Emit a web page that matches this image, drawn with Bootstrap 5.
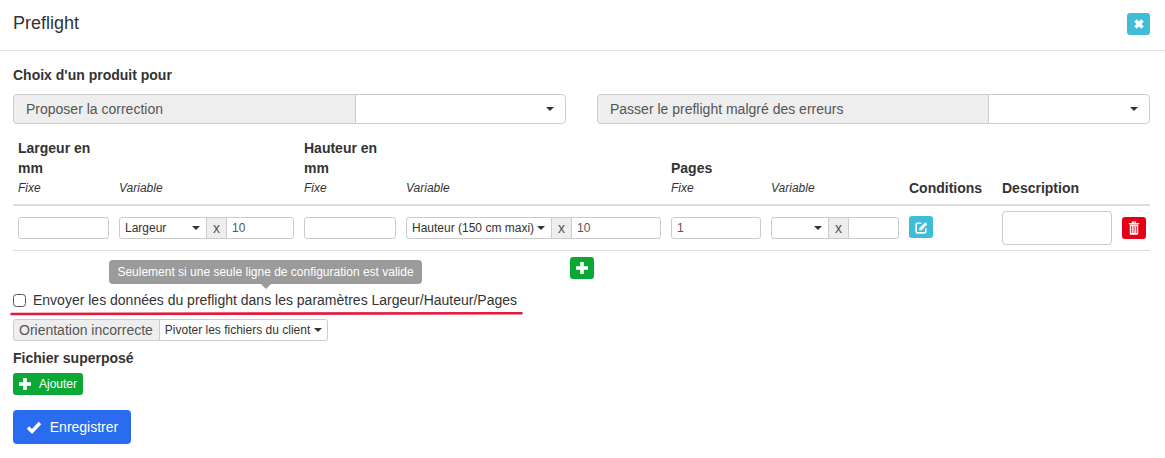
<!DOCTYPE html>
<html lang="fr"><head><meta charset="utf-8"><title>Preflight</title>
<link href="https://cdn.jsdelivr.net/npm/bootstrap@5.3.0/dist/css/bootstrap.min.css" rel="stylesheet">
<style>
body{font-family:"Liberation Sans",Arial,sans-serif;font-size:14px;line-height:20px;color:#333;background:#fff}
.pf-head{height:51px;padding:13px 15px 0 13px;border-bottom:1px solid #e5e5e5}
.pf-title{font-size:18px;line-height:20px;margin:0;font-weight:400}
.pf-body{padding:14px 15px 0 13px;position:relative}
.pf-strong{font-weight:700;font-size:14px;margin:0}
.pf-icobtn{width:24px;height:22px;padding:0;border:0;border-radius:3px;color:#fff;display:inline-flex;align-items:center;justify-content:center}
.pf-close{width:23px}
.pf-info{background:#3fbcd8}.pf-green{background:#0ba838}.pf-red{background:#e60017}
.pf-top{margin-top:9px;gap:31px}
.pf-top .input-group{width:553px;height:30px;flex-wrap:nowrap}
.pf-top .input-group-text{font-size:14px;padding:0 12px;background:#eee;color:#555;border-color:#ccc;border-radius:4px 0 0 4px}
.pf-sel{background:#fff;border:1px solid #ccc;border-radius:0 4px 4px 0;padding:0 11px 0 5px;display:flex;align-items:center;justify-content:space-between;font-size:12px;color:#333;white-space:nowrap;text-align:left}
.pf-sel::after,.pf-sel:empty::after{margin:0 0 0 auto;border-top-color:#333;border-width:4px 4px 0;flex:none}
.pf-sel:hover,.pf-sel:active{background:#fff!important;color:#333!important;border-color:#ccc!important}
.pf-top .pf-a{width:343px;flex:none}.pf-top .pf-a2{width:392px;flex:none}
.pf-top .pf-sel{flex:1}
.pf-table{table-layout:fixed;width:1137px;margin:9px 0 0;color:#333;border-collapse:collapse}
.pf-table>:not(caption)>*>*{padding:0 5px;border:0;background:transparent;box-shadow:none;color:#333}
.pf-table thead tr:first-child th{padding-top:5px;vertical-align:bottom;line-height:20px}
.pf-table thead tr:last-child>*{padding-bottom:6px;border-bottom:2px solid #ddd;vertical-align:bottom}
.pf-table thead em{font-size:12px;font-weight:400;line-height:21px;display:block;height:20px}
.pf-table tbody td{padding:5px;border-bottom:1px solid #ddd;vertical-align:middle;height:45px}
.pf-c1{width:101px}.pf-c2{width:185px}.pf-c3{width:102px}.pf-c4{width:265px}.pf-c5{width:100px}.pf-c6{width:138px}.pf-c7{width:93px}.pf-c8{width:120px}.pf-c9{width:33px}
.pf-in{height:22px;font-size:12px;line-height:20px;padding:0 5px;border:1px solid #ccc;border-radius:3px;color:#555;width:100%;min-height:0}
.pf-g{height:22px;flex-wrap:nowrap;width:100%}
.pf-g .input-group-text{height:22px;font-size:14px;padding:0 6px;background:#eee;color:#555;border-color:#ccc;border-radius:0;flex:none}
.pf-g .pf-sel{height:22px;border:1px solid #ccc;border-radius:3px 0 0 3px;flex:none;padding:0 6px 0 5px}
.pf-g .pf-in{flex:1;border-radius:0 3px 3px 0;width:1%}
.pf-w1{width:88px}.pf-w2{width:146px}.pf-w3{width:58px}
textarea.pf-desc{height:34px;width:110px;border:1px solid #ccc;border-radius:4px;padding:0 5px;display:block;resize:none;min-height:0}
.pf-addrow{margin-top:6px;padding-left:557px;height:22px}
.pf-check{margin-top:11px;display:flex;align-items:center;gap:7px;height:20px}
.pf-check input{width:13px;height:13px;margin:0;border:1px solid #555;border-radius:2.5px;flex:none}
.pf-tip{position:absolute;left:109px;top:209px;background:#9b9b9b;color:#fff;font-size:12px;line-height:16px;padding:4px 8px;border-radius:4px;white-space:nowrap;width:313px;text-align:center}
.pf-tip::after{content:"";position:absolute;left:50%;bottom:-5px;margin-left:-5px;border-style:solid;border-width:5px 5px 0;border-color:#9b9b9b transparent transparent}
.pf-line{position:absolute;left:10px;top:259px;width:513px;height:6px;display:block}
.pf-orient{margin-top:9px;height:22px;width:315px;flex-wrap:nowrap}
.pf-orient .input-group-text{height:22px;padding:0 6px 0 5px;font-size:14px;background:#eee;color:#555;border-color:#ccc;border-radius:3px 0 0 3px}
.pf-orient .pf-sel{flex:1;height:22px;border-radius:0 3px 3px 0;padding:0 5px}
.pf-ov{margin-top:7px}
.pf-add{margin-top:5px;height:22px;width:70px;background:#0ba838;color:#fff;border:0;border-radius:3px;font-size:12px;padding:0 0 0 6px;display:flex;align-items:center;gap:8px}
.pf-save{margin-top:15px;width:118px;height:34px;background:#2a6cf0;color:#fff;border:0;border-radius:4px;font-size:14px;padding:0;display:flex;align-items:center;justify-content:center;gap:8px}
</style></head>
<body>
<div class="pf-head d-flex justify-content-between align-items-start">
  <h4 class="pf-title">Preflight</h4>
  <button class="pf-icobtn pf-close pf-info" type="button" aria-label="Fermer"><svg width="12" height="12" viewBox="0 0 12 12"><path d="M2.500 2.500l7 7M9.500 2.500l-7 7" stroke="#fff" stroke-width="3.400" fill="none"/></svg></button>
</div>
<div class="pf-body">
  <p class="pf-strong">Choix d'un produit pour</p>
  <div class="d-flex pf-top">
    <div class="input-group"><span class="input-group-text pf-a">Proposer la correction</span><button type="button" class="btn dropdown-toggle pf-sel"></button></div>
    <div class="input-group"><span class="input-group-text pf-a2">Passer le preflight malgré des erreurs</span><button type="button" class="btn dropdown-toggle pf-sel"></button></div>
  </div>
  <table class="table pf-table">
    <colgroup><col class="pf-c1"><col class="pf-c2"><col class="pf-c3"><col class="pf-c4"><col class="pf-c5"><col class="pf-c6"><col class="pf-c7"><col class="pf-c8"><col class="pf-c9"></colgroup>
    <thead>
      <tr><th>Largeur en mm</th><th></th><th>Hauteur en mm</th><th></th><th>Pages</th><th></th><th></th><th></th><th></th></tr>
      <tr><th><em>Fixe</em></th><th><em>Variable</em></th><th><em>Fixe</em></th><th><em>Variable</em></th><th><em>Fixe</em></th><th><em>Variable</em></th><th>Conditions</th><th>Description</th><th></th></tr>
    </thead>
    <tbody><tr>
      <td><input class="form-control pf-in" type="text"></td>
      <td><div class="input-group pf-g"><button type="button" class="btn dropdown-toggle pf-sel pf-w1">Largeur</button><span class="input-group-text">x</span><input class="form-control pf-in" type="text" value="10"></div></td>
      <td><input class="form-control pf-in" type="text"></td>
      <td><div class="input-group pf-g"><button type="button" class="btn dropdown-toggle pf-sel pf-w2">Hauteur (150 cm maxi)</button><span class="input-group-text">x</span><input class="form-control pf-in" type="text" value="10"></div></td>
      <td><input class="form-control pf-in" type="text" value="1"></td>
      <td><div class="input-group pf-g"><button type="button" class="btn dropdown-toggle pf-sel pf-w3"></button><span class="input-group-text">x</span><input class="form-control pf-in" type="text"></div></td>
      <td><button class="pf-icobtn pf-info" type="button" aria-label="Conditions"><svg width="15" height="15" viewBox="0 0 14 14"><path d="M7 3H3.200A1.200 1.200 0 0 0 2 4.200v6.600A1.200 1.200 0 0 0 3.200 12h6.600a1.200 1.200 0 0 0 1.200-1.200V8" stroke="#fff" stroke-width="1.500" fill="none"/><path d="M5 7.500L10.500 2l2 2L7 9.500H5z" fill="#fff"/></svg></button></td>
      <td><textarea class="form-control pf-desc"></textarea></td>
      <td><button class="pf-icobtn pf-red" type="button" aria-label="Supprimer"><svg width="12" height="14" viewBox="0 0 12 14"><path d="M4.500 2V1h3v1M.8 2.600h10.400" stroke="#fff" stroke-width="1.200" fill="none"/><path d="M1.800 3.600h8.400V13a.8.8 0 0 1-.8.8H2.600a.8.8 0 0 1-.8-.8z" fill="#fff"/><path d="M3.700 5v7M6 5v7M8.300 5v7" stroke="#e60017" stroke-width=".9"/></svg></button></td>
    </tr></tbody>
  </table>
  <div class="pf-addrow"><button class="pf-icobtn pf-green" type="button" aria-label="Ajouter une ligne"><svg width="12" height="12" viewBox="0 0 12 12"><path d="M6 0v12M0 6h12" stroke="#fff" stroke-width="3.600"/></svg></button></div>
  <div class="pf-tip">Seulement si une seule ligne de configuration est valide</div>
  <label class="pf-check"><input class="form-check-input" type="checkbox"><span>Envoyer les données du preflight dans les paramètres Largeur/Hauteur/Pages</span></label>
  <svg class="pf-line" viewBox="0 0 513 6" aria-hidden="true"><path d="M1.500 4C120 4 250 3.200 511.500 3.200" stroke="#e3193f" stroke-width="2.600" stroke-linecap="round" fill="none"/></svg>
  <div class="input-group pf-orient"><span class="input-group-text">Orientation incorrecte</span><button type="button" class="btn dropdown-toggle pf-sel">Pivoter les fichiers du client</button></div>
  <p class="pf-strong pf-ov">Fichier superposé</p>
  <button class="pf-add" type="button"><svg width="12" height="12" viewBox="0 0 12 12"><path d="M6 0v12M0 6h12" stroke="#fff" stroke-width="3.600"/></svg>Ajouter</button>
  <button class="pf-save" type="button"><svg width="16" height="13" viewBox="0 0 16 13"><path d="M2 6.500l4 4 8-8.500" stroke="#fff" stroke-width="3.400" fill="none"/></svg>Enregistrer</button>
</div>
</body></html>
